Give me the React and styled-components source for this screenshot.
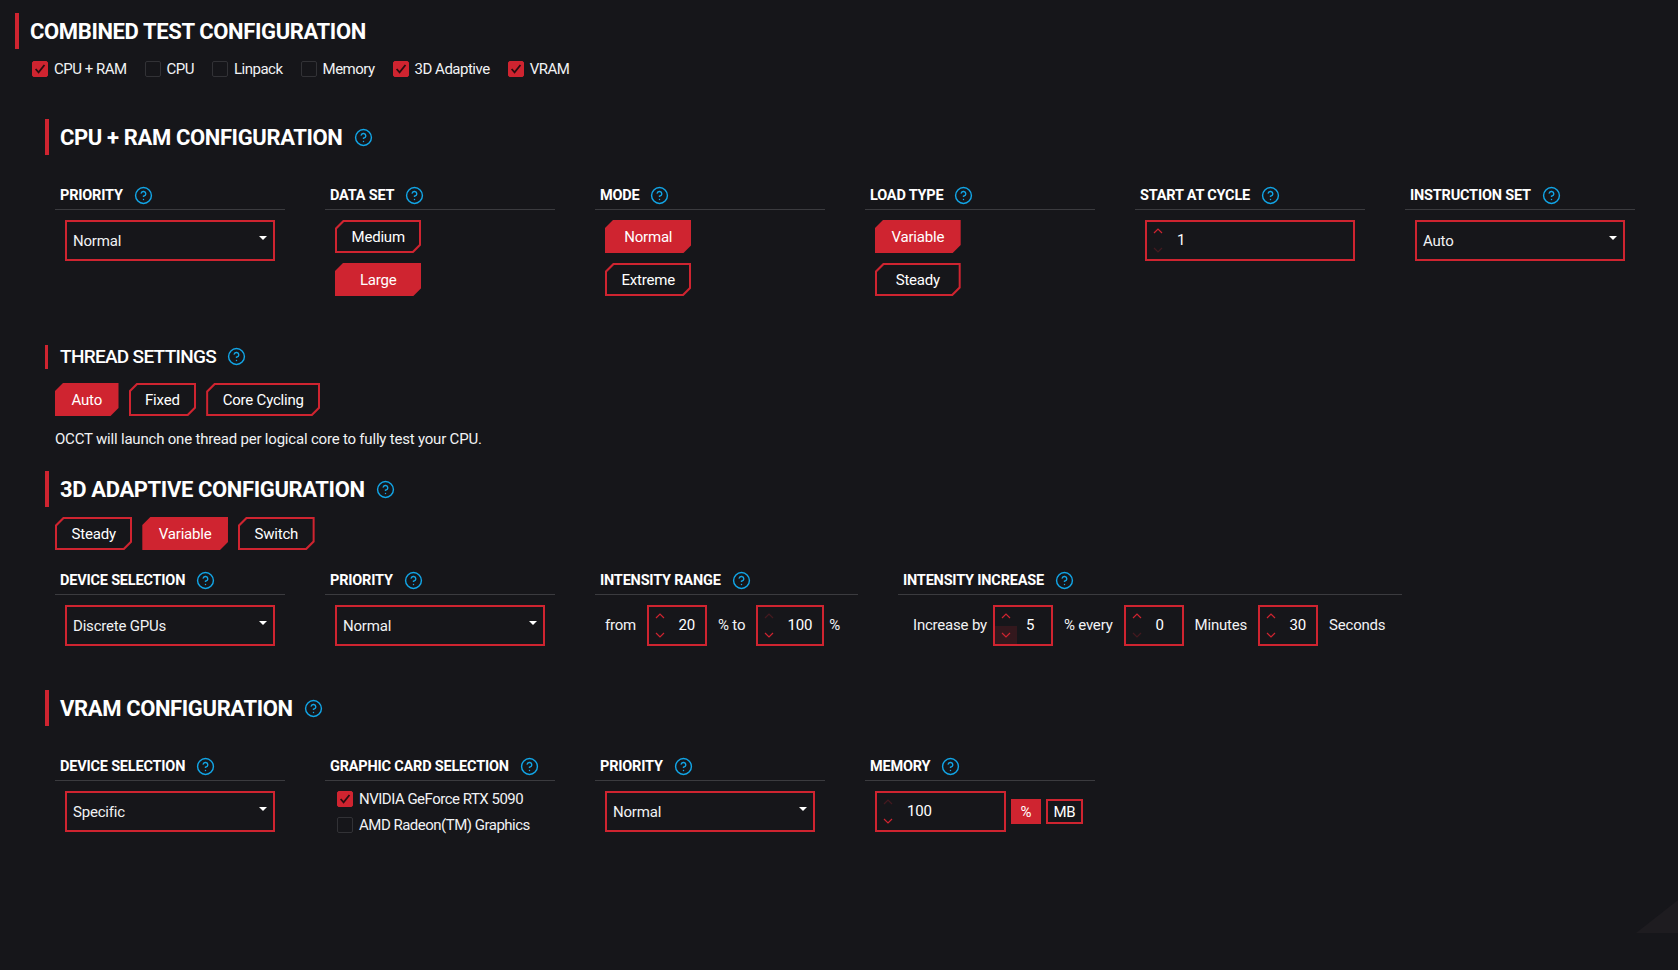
import React from 'react';
import styled, { createGlobalStyle } from 'styled-components';
import { CircleHelp } from 'lucide-react';

const RED = '#cf2430';
const BG = '#16161a';
const CUT = 'polygon(8px 0, 100% 0, 100% calc(100% - 8px), calc(100% - 8px) 100%, 0 100%, 0 8px)';
const INNER_CUT = 'polygon(7px 0, 100% 0, 100% calc(100% - 7px), calc(100% - 7px) 100%, 0 100%, 0 7px)';

const GlobalStyle = createGlobalStyle`
  html, body {
    margin: 0;
    height: 100%;
    background: ${BG};
    color: #fff;
    font-family: Roboto, "Liberation Sans", Arial, sans-serif;
    font-size: 15px;
    letter-spacing: -0.2px;
  }
  * { box-sizing: border-box; }
`;

const Page = styled.div`
  position: relative;
  width: 1678px;
  height: 970px;
  overflow: hidden;
  padding: 13px 0 0 15px;
`;

const Title = styled.div`
  display: flex;
  align-items: center;
  height: ${(p) => p.$height}px;
  margin-top: ${(p) => p.$top || 0}px;
  padding-left: ${(p) => p.$pad}px;
  padding-bottom: ${(p) => p.$lift || 0}px;
  border-left: ${(p) => p.$bar}px solid ${RED};
  font-size: ${(p) => p.$size}px;
  font-weight: ${(p) => p.$weight};
  letter-spacing: ${(p) => p.$spacing}px;
  text-transform: uppercase;
  white-space: nowrap;
`;

const Help = styled(CircleHelp).attrs({ size: 19, strokeWidth: 1.8 })`
  flex: none;
  color: #12a5e6;
  margin-left: 11px;
`;

const CheckRow = styled.div`
  display: flex;
  margin: 12px 0 0 17px;
`;

const CheckItem = styled.label`
  display: flex;
  align-items: center;
  gap: 6px;
  height: 16px;
  margin-right: 18px;
  font-size: 15px;
  letter-spacing: -0.5px;
  color: #f1f2f4;
  white-space: nowrap;
`;

const Box = styled.span`
  flex: none;
  display: flex;
  align-items: center;
  justify-content: center;
  width: 16px;
  height: 16px;
  border-radius: 2px;
  background: ${(p) => (p.$on ? RED : BG)};
  border: 1.5px solid ${(p) => (p.$on ? RED : '#323236')};
`;

const Section = styled.div`
  padding-left: 30px;
`;

const Grid = styled.div`
  display: grid;
  grid-template-columns: ${(p) => p.$columns || 'repeat(6, 230px)'};
  column-gap: 40px;
  margin: ${(p) => p.$top}px 0 0 10px;
`;

const ColHead = styled.div`
  display: flex;
  align-items: center;
  height: 29px;
  padding: 1px 0 0 5px;
  border-bottom: 1px solid #3b3b3f;
  font-size: 14.5px;
  font-weight: 700;
  letter-spacing: -0.2px;
  text-transform: uppercase;
  white-space: nowrap;
`;

const ColBody = styled.div`
  padding: 10px 0 0 ${(p) => p.$left ?? 10}px;
`;

const SelectBox = styled.div`
  position: relative;
  display: flex;
  align-items: center;
  width: 210px;
  height: 41px;
  padding: 0 0 0 6px;
  border: 2px solid ${RED};
  font-size: 15px;
  color: #f1f2f4;
`;

const Caret = styled.span`
  position: absolute;
  top: 14px;
  right: 6px;
  border-left: 4px solid transparent;
  border-right: 4px solid transparent;
  border-top: 4px solid #fff;
`;

const ButtonStack = styled.div`
  display: inline-flex;
  flex-direction: column;
  gap: 10px;
`;

const ButtonRow = styled.div`
  display: flex;
  gap: 10px;
  margin: ${(p) => p.$top}px 0 0 10px;
`;

const Btn = styled.div`
  position: relative;
  isolation: isolate;
  display: flex;
  align-items: center;
  justify-content: center;
  height: 33px;
  padding: 0 16.5px;
  background: ${RED};
  clip-path: ${CUT};
  font-size: 15px;
  color: #fff;
  white-space: nowrap;

  &::before {
    content: '';
    display: ${(p) => (p.$on ? 'none' : 'block')};
    position: absolute;
    inset: 2px;
    z-index: -1;
    background: ${BG};
    clip-path: ${INNER_CUT};
  }
`;

const Description = styled.p`
  margin: 13px 0 0 10px;
  font-size: 15px;
  line-height: 20px;
  color: #f1f2f4;
`;

const Inline = styled.div`
  display: flex;
  align-items: center;
  height: 41px;
  font-size: 15px;
  color: #f1f2f4;
  white-space: nowrap;
`;

const Unit = styled.span`
  margin: ${(p) => p.$margin || '0 11px'};
  padding-bottom: 2px;
`;

const NumBox = styled.div`
  position: relative;
  display: flex;
  align-items: center;
  justify-content: ${(p) => (p.$left ? 'flex-start' : 'flex-end')};
  width: ${(p) => p.$width}px;
  height: 41px;
  padding: ${(p) => (p.$left ? `0 0 2px ${p.$left}px` : '0 10px 2px 0')};
  border: 2px solid ${RED};
  color: #fff;
  font-size: 15px;
`;

const Arrow = styled.svg`
  position: absolute;
  left: 6px;
  ${(p) => (p.$up ? 'top: 6px;' : 'bottom: 6px;')}
  width: 10px;
  height: 6px;
  fill: none;
  stroke: ${RED};
  stroke-width: 1.2;
  opacity: ${(p) => (p.$dim ? 0.25 : 1)};
`;

const HoverPatch = styled.span`
  position: absolute;
  left: 0;
  bottom: 0;
  width: 22px;
  height: 18px;
  background: rgba(207, 36, 48, 0.16);
`;

const UnitRow = styled.div`
  display: flex;
  align-items: center;
  gap: 5px;
`;

const UnitBtn = styled.div`
  display: flex;
  align-items: center;
  justify-content: center;
  width: ${(p) => p.$width}px;
  height: 25px;
  background: ${(p) => (p.$on ? RED : 'transparent')};
  border: 2px solid ${RED};
  font-size: 15px;
  color: #fff;
`;

const Stack = styled.div`
  display: flex;
  flex-direction: column;
  gap: 10px;
`;

const Corner = styled.div`
  position: absolute;
  right: 0;
  bottom: 37px;
  width: 42px;
  height: 33px;
  background: #1e1c20;
  clip-path: polygon(100% 0, 100% 100%, 0 100%);
`;

function Check({ on, label }) {
  return (
    <CheckItem>
      <Box $on={on}>
        {on && (
          <svg width="12" height="12" viewBox="0 0 11 11" fill="none" stroke="#2a0d10" strokeWidth="1.6">
            <path d="M1.5 5.5 L4.2 8.6 L9.6 1.8" />
          </svg>
        )}
      </Box>
      {label}
    </CheckItem>
  );
}

function Column({ label, children, left }) {
  return (
    <div>
      <ColHead>
        {label}
        <Help />
      </ColHead>
      <ColBody $left={left}>{children}</ColBody>
    </div>
  );
}

function Select({ value }) {
  return (
    <SelectBox>
      {value}
      <Caret />
    </SelectBox>
  );
}

function Buttons({ items, active }) {
  return (
    <ButtonStack>
      {items.map((item) => (
        <Btn key={item} $on={item === active}>{item}</Btn>
      ))}
    </ButtonStack>
  );
}

function ButtonBar({ items, active, top }) {
  return (
    <ButtonRow $top={top}>
      {items.map((item) => (
        <Btn key={item} $on={item === active}>{item}</Btn>
      ))}
    </ButtonRow>
  );
}

function NumInput({ value, width, left, dimUp, dimDown, hover }) {
  return (
    <NumBox $width={width} $left={left}>
      {hover && <HoverPatch />}
      <Arrow $up $dim={dimUp} viewBox="0 0 10 6"><path d="M1 5 L5 1 L9 5" /></Arrow>
      {value}
      <Arrow $dim={dimDown} viewBox="0 0 10 6"><path d="M1 1 L5 5 L9 1" /></Arrow>
    </NumBox>
  );
}

export default function App() {
  return (
    <Page>
      <GlobalStyle />
      <Title $height={36} $bar={4} $pad={11} $size={22} $weight={700} $spacing={-0.37}>Combined Test Configuration</Title>
      <CheckRow>
        <Check on label="CPU + RAM" />
        <Check label="CPU" />
        <Check label="Linpack" />
        <Check label="Memory" />
        <Check on label="3D Adaptive" />
        <Check on label="VRAM" />
      </CheckRow>

      <Section>
        <Title $top={42} $height={36} $bar={4} $pad={11} $size={22} $weight={700} $spacing={-0.37}>
          CPU + RAM Configuration
          <Help />
        </Title>
        <Grid $top={26}>
          <Column label="Priority"><Select value="Normal" /></Column>
          <Column label="Data Set"><Buttons items={['Medium', 'Large']} active="Large" /></Column>
          <Column label="Mode"><Buttons items={['Normal', 'Extreme']} active="Normal" /></Column>
          <Column label="Load Type"><Buttons items={['Variable', 'Steady']} active="Variable" /></Column>
          <Column label="Start at cycle">
            <NumInput value="1" width={210} left={30} dimDown />
          </Column>
          <Column label="Instruction Set"><Select value="Auto" /></Column>
        </Grid>

        <Title $top={49} $height={24} $bar={3} $pad={12} $lift={2} $size={19} $weight={500} $spacing={-0.7}>
          Thread Settings
          <Help />
        </Title>
        <ButtonBar items={['Auto', 'Fixed', 'Core Cycling']} active="Auto" top={14} />
        <Description>OCCT will launch one thread per logical core to fully test your CPU.</Description>

        <Title $top={22} $height={36} $bar={4} $pad={11} $size={22} $weight={700} $spacing={-0.37}>
          3D Adaptive Configuration
          <Help />
        </Title>
        <ButtonBar items={['Steady', 'Variable', 'Switch']} active="Variable" top={10} />
        <Grid $top={16} $columns="230px 230px 263px 504px">
          <Column label="Device Selection"><Select value="Discrete GPUs" /></Column>
          <Column label="Priority"><Select value="Normal" /></Column>
          <Column label="Intensity Range">
            <Inline>
              <Unit $margin="0 11px 0 0">from</Unit>
              <NumInput value="20" width={60} />
              <Unit>% to</Unit>
              <NumInput value="100" width={68} dimUp />
              <Unit $margin="0 0 0 5px">%</Unit>
            </Inline>
          </Column>
          <Column label="Intensity Increase" left={15}>
            <Inline>
              <Unit $margin="0 6px 0 0">Increase by</Unit>
              <NumInput value="5" width={60} left={31} hover />
              <Unit>% every</Unit>
              <NumInput value="0" width={60} left={30} dimDown />
              <Unit>Minutes</Unit>
              <NumInput value="30" width={60} />
              <Unit>Seconds</Unit>
            </Inline>
          </Column>
        </Grid>

        <Title $top={44} $height={36} $bar={4} $pad={11} $size={22} $weight={700} $spacing={-0.37}>
          VRAM Configuration
          <Help />
        </Title>
        <Grid $top={26}>
          <Column label="Device Selection"><Select value="Specific" /></Column>
          <Column label="Graphic Card Selection" left={12}>
            <Stack>
              <Check on label="NVIDIA GeForce RTX 5090" />
              <Check label="AMD Radeon(TM) Graphics" />
            </Stack>
          </Column>
          <Column label="Priority"><Select value="Normal" /></Column>
          <Column label="Memory">
            <UnitRow>
              <NumInput value="100" width={131} left={30} dimUp />
              <UnitBtn $on $width={30}>%</UnitBtn>
              <UnitBtn $width={37}>MB</UnitBtn>
            </UnitRow>
          </Column>
        </Grid>
      </Section>
      <Corner />
    </Page>
  );
}
